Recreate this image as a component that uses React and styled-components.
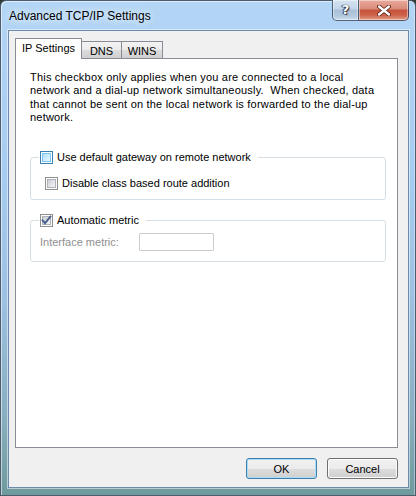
import React from 'react';
import styled, { createGlobalStyle, css } from 'styled-components';

const GlobalStyle = createGlobalStyle`
  html, body {
    margin: 0;
    padding: 0;
    background: #2e3b30;
  }
  * {
    box-sizing: border-box;
  }
`;

const uiFont = `'Liberation Sans', Arial, sans-serif`;

const DialogWindow = styled.div`
  width: 416px;
  height: 496px;
  display: flex;
  flex-direction: column;
  padding: 0 6px 7px 7px;
  border: 1px solid #4b5d6e;
  border-radius: 6px 6px 0 0;
  background: linear-gradient(
    180deg,
    #b3d5f6 0%,
    #a6ccf1 35%,
    #9cc1e2 60%,
    #86aebf 85%,
    #6f9a9c 100%
  );
  box-shadow: inset 1px 1px 0 rgba(255, 255, 255, 0.55),
    inset -1px 0 0 rgba(255, 255, 255, 0.35);
  font-family: ${uiFont};
`;

const TitleBar = styled.div`
  height: 29px;
  display: flex;
  justify-content: space-between;
  align-items: flex-start;
`;

const TitleText = styled.div`
  margin-top: 8px;
  padding-left: 1px;
  font-size: 12px;
  color: #000;
  text-shadow: 0 0 6px #e8f3ff, 0 0 10px #e8f3ff;
`;

const CaptionButtons = styled.div`
  display: flex;
  margin-top: -1px;
`;

const CaptionButton = styled.div`
  height: 21px;
  display: flex;
  align-items: center;
  justify-content: center;
  border: 1px solid rgba(38, 56, 82, 0.75);
  border-top: none;
  box-shadow: inset 0 0 0 1px rgba(255, 255, 255, 0.45);

  ${p =>
    p.$close
      ? css`
          width: 50px;
          border-left: none;
          border-radius: 0 0 5px 0;
          background: linear-gradient(
            180deg,
            #e9a99b 0%,
            #d98b7a 45%,
            #c6523a 50%,
            #cd6148 75%,
            #e19c86 100%
          );
        `
      : css`
          width: 27px;
          border-radius: 0 0 0 5px;
          background: linear-gradient(
            180deg,
            #d6e4f1 0%,
            #c2d5e8 45%,
            #a8bfd6 50%,
            #b3c9de 80%,
            #cddff0 100%
          );
        `}
`;

const HelpGlyph = styled.span`
  font-family: 'DejaVu Sans', sans-serif;
  font-weight: bold;
  font-size: 13px;
  color: #fff;
  text-shadow: 0 0 1px #223, 1px 1px 1px #334, -1px 0 1px #334;
  margin-top: -1px;
`;

const ClientArea = styled.div`
  flex: 1;
  display: flex;
  flex-direction: column;
  padding: 7px 10px 8px 6px;
  background: #f0f0f0;
  border: 1px solid #6c8aac;
  box-shadow: 0 0 0 1px rgba(255, 255, 255, 0.5);
`;

const TabStrip = styled.div`
  height: 20px;
  display: flex;
  align-items: flex-end;
`;

const Tab = styled.div`
  display: flex;
  align-items: center;
  justify-content: center;
  font-size: 11px;
  color: #000;
  border: 1px solid #898c95;
  border-bottom: none;
  width: ${p => p.$width}px;

  ${p =>
    p.$active
      ? css`
          position: relative;
          z-index: 1;
          height: 21px;
          margin-bottom: -1px;
          padding-bottom: 2px;
          background: #fff;
        `
      : css`
          height: 17px;
          padding-top: 1px;
          border-left: none;
          background: linear-gradient(180deg, #f2f2f2 0%, #ebebeb 50%, #dddddd 51%, #cfcfcf 100%);
        `}
`;

const TabPanel = styled.div`
  flex: 1;
  display: flex;
  flex-direction: column;
  padding: 12px 11px 0 14px;
  background: #fff;
  border: 1px solid #898c95;
`;

const Description = styled.p`
  margin: 0;
  font-size: 11px;
  line-height: 13.4px;
  letter-spacing: 0.2px;
  color: #000;
  white-space: nowrap;
`;

const GroupBox = styled.fieldset`
  margin: ${p => p.$top}px 0 0 0;
  padding: 0 8px ${p => p.$bottom}px 8px;
  border: 1px solid #d5dfe5;
  border-radius: 3px;
  min-width: 0;
`;

const GroupLegend = styled.legend`
  padding: 0 7px 0 1px;
  margin-left: 0;
`;

const CheckRow = styled.label`
  display: flex;
  align-items: center;
  gap: 4px;
  font-size: 11px;
  color: #000;
  margin-left: ${p => p.$indent || 0}px;
  margin-top: ${p => p.$top || 0}px;
  line-height: 13px;
`;

const CheckFrame = styled.span`
  width: 13px;
  height: 13px;
  flex-shrink: 0;
  position: relative;
  display: inline-flex;
  align-items: center;
  justify-content: center;
  border: 1px solid ${p => (p.$hot ? '#3c7fb1' : '#8e8f8f')};
  background: #fff;
`;

const CheckFill = styled.span`
  width: 9px;
  height: 9px;
  border: 1px solid ${p => (p.$hot ? '#79c6f9' : '#aeb3b9')};
  background: ${p =>
    p.$hot
      ? 'linear-gradient(135deg, #b1dffd 0%, #e9f7fe 100%)'
      : 'linear-gradient(135deg, #cbcfd5 0%, #f6f6f6 100%)'};
`;

const CheckMark = styled.svg`
  position: absolute;
  left: 0;
  top: 0;
  width: 11px;
  height: 11px;
`;

function Checkbox({ hot, checked }) {
  return (
    <CheckFrame $hot={hot}>
      <CheckFill $hot={hot} />
      {checked && (
        <CheckMark viewBox="0 0 11 11">
          <path
            d="M1.6 5.4 L4 8.2 L9.4 1.6"
            fill="none"
            stroke="#4a5f8d"
            strokeWidth="1.9"
            strokeLinecap="square"
          />
        </CheckMark>
      )}
    </CheckFrame>
  );
}

const MetricRow = styled.div`
  display: flex;
  align-items: center;
  margin: 6px 0 0 1px;
`;

const MetricLabel = styled.span`
  width: 99px;
  font-size: 11px;
  color: #8f8f8f;
`;

const MetricInput = styled.input`
  width: 75px;
  height: 18px;
  border: 1px solid #c9ccd1;
  border-radius: 1px;
  background: #fff;
  padding: 0 3px;
  font-family: ${uiFont};
  font-size: 11px;
`;

const Footer = styled.div`
  display: flex;
  justify-content: flex-end;
  gap: 10px;
  margin-top: 10px;
`;

const DialogButton = styled.button`
  width: 71px;
  height: 21px;
  padding: 0;
  border-radius: 3px;
  font-family: ${uiFont};
  font-size: 11px;
  color: #000;
  border: 1px solid ${p => (p.$default ? '#3c7fb1' : '#707070')};
  box-shadow: inset 0 0 0 1px ${p => (p.$default ? '#a9dcf7' : '#fcfcfc')};
  background: linear-gradient(180deg, #f2f2f2 0%, #ebebeb 50%, #dddddd 51%, #cfcfcf 100%);
`;

function App() {
  return (
    <>
      <GlobalStyle />
      <DialogWindow>
        <TitleBar>
          <TitleText>Advanced TCP/IP Settings</TitleText>
          <CaptionButtons>
            <CaptionButton>
              <HelpGlyph>?</HelpGlyph>
            </CaptionButton>
            <CaptionButton $close>
              <svg width="14" height="11" viewBox="0 0 14 11">
                <path
                  d="M2 1.5 L12 9.5 M12 1.5 L2 9.5"
                  stroke="#5a1a10"
                  strokeWidth="4"
                  strokeLinecap="round"
                />
                <path
                  d="M2 1.5 L12 9.5 M12 1.5 L2 9.5"
                  stroke="#fff"
                  strokeWidth="2.4"
                  strokeLinecap="round"
                />
              </svg>
            </CaptionButton>
          </CaptionButtons>
        </TitleBar>
        <ClientArea>
          <TabStrip>
            <Tab $active $width={67}>IP Settings</Tab>
            <Tab $width={40}>DNS</Tab>
            <Tab $width={41}>WINS</Tab>
          </TabStrip>
          <TabPanel>
            <Description>
              This checkbox only applies when you are connected to a local
              <br />
              network and a dial-up network simultaneously.&nbsp; When checked, data
              <br />
              that cannot be sent on the local network is forwarded to the dial-up
              <br />
              network.
            </Description>
            <GroupBox $top={26} $bottom={9}>
              <GroupLegend>
                <CheckRow>
                  <Checkbox hot />
                  Use default gateway on remote network
                </CheckRow>
              </GroupLegend>
              <CheckRow $indent={6} $top={13}>
                <Checkbox />
                Disable class based route addition
              </CheckRow>
            </GroupBox>
            <GroupBox $top={14} $bottom={10}>
              <GroupLegend>
                <CheckRow>
                  <Checkbox checked />
                  Automatic metric
                </CheckRow>
              </GroupLegend>
              <MetricRow>
                <MetricLabel>Interface metric:</MetricLabel>
                <MetricInput disabled />
              </MetricRow>
            </GroupBox>
          </TabPanel>
          <Footer>
            <DialogButton $default>OK</DialogButton>
            <DialogButton>Cancel</DialogButton>
          </Footer>
        </ClientArea>
      </DialogWindow>
    </>
  );
}

export default App;
